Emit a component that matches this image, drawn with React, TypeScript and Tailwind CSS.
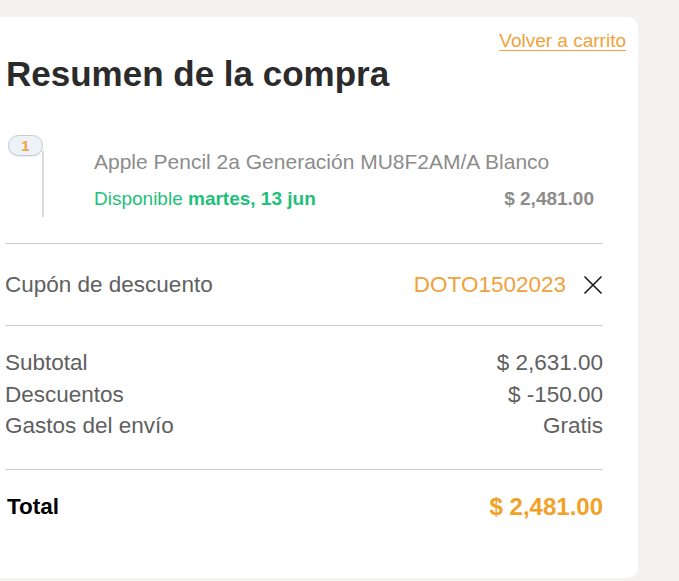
import React from "react";

export default function App() {
  return (
    <div className="min-h-[581px] bg-[#f4f1f1] pt-[17px] font-['Liberation_Sans',Arial,sans-serif]">
      <div className="w-[638px] h-[561px] bg-white rounded-r-[10px] relative">
        <div className="flex justify-end pr-[12px] pt-[14px]">
          <a className="text-[19px] leading-[20px] text-[#f0a23c] underline decoration-[#f0a23c] underline-offset-[3px]">
            Volver a carrito
          </a>
        </div>
        <h1 className="mt-[3px] pl-[6px] text-[35px] leading-[40px] font-bold text-[#2b2b2b]">
          Resumen de la compra
        </h1>
        <div className="w-[598px] ml-[5px]">
          <div className="relative mt-[41px] h-[82px]">
            <div className="absolute left-[37px] top-[16px] h-[66px] w-[2px] bg-[#dcdcdc]" />
            <div className="absolute left-[3px] top-0 w-[35px] h-[21px] rounded-full bg-[#edf2f8] border border-[#c6cbd3] shadow-[0_1px_1px_rgba(0,0,0,0.08)] flex items-center justify-center text-[15px] font-bold text-[#f0a23c] leading-none">
              1
            </div>
            <div className="pl-[89px] pr-[9px] pt-[15px]">
              <div className="text-[21px] leading-[24px] text-[#8c8c8c]">
                Apple Pencil 2a Generación MU8F2AM/A Blanco
              </div>
              <div className="mt-[13px] flex justify-between text-[19px] leading-[24px]">
                <span className="text-[#1fc07c]">
                  Disponible <span className="font-bold">martes, 13 jun</span>
                </span>
                <span className="font-bold text-[#8c8c8c]">$ 2,481.00</span>
              </div>
            </div>
          </div>
          <div className="mt-[26px] h-px bg-[#cfcfcf]" />
          <div className="h-[81px] flex items-center justify-between text-[22.5px] leading-[26px]">
            <span className="text-[#606060]">Cupón de descuento</span>
            <div className="flex items-center">
              <span className="text-[#f0a23c]">DOTO1502023</span>
              <svg className="ml-[17px]" width="20" height="20" viewBox="0 0 20 20">
                <path d="M1.5 1.5 L18.5 18.5 M18.5 1.5 L1.5 18.5" stroke="#1a1a1a" strokeWidth="1.6" fill="none" />
              </svg>
            </div>
          </div>
          <div className="h-px bg-[#cfcfcf]" />
          <div className="pt-[21px] pb-[27px] text-[22.5px] leading-[31.5px] text-[#606060]">
            <div className="flex justify-between">
              <span>Subtotal</span>
              <span>$ 2,631.00</span>
            </div>
            <div className="flex justify-between">
              <span>Descuentos</span>
              <span>$ -150.00</span>
            </div>
            <div className="flex justify-between">
              <span>Gastos del envío</span>
              <span>Gratis</span>
            </div>
          </div>
          <div className="h-px bg-[#cfcfcf]" />
          <div className="pt-[23px] flex justify-between items-center leading-[28px] font-bold">
            <span className="pl-[2px] text-[22.5px] text-black">Total</span>
            <span className="text-[24px] text-[#f2a127]">$ 2,481.00</span>
          </div>
        </div>
      </div>
    </div>
  );
}
